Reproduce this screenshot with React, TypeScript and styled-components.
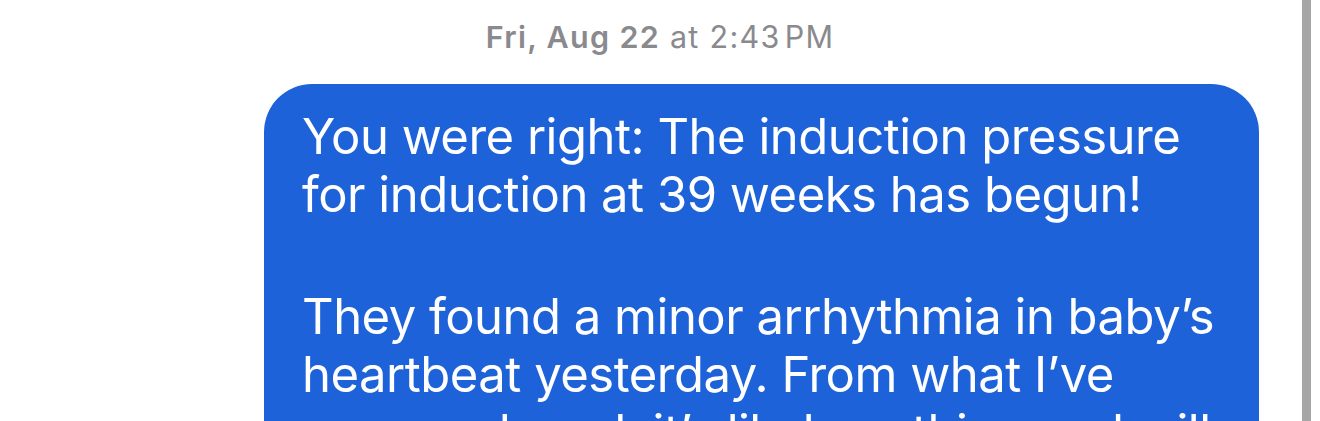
import React from "react";
import styled, { createGlobalStyle } from "styled-components";

const Global = createGlobalStyle`
  html, body { margin: 0; padding: 0; background: #ffffff; }
  body { font-family: Inter, "Noto Sans", sans-serif; -webkit-font-smoothing: antialiased; }
`;

const Screen = styled.div`
  display: flex;
  width: 1320px;
  height: 421px;
  overflow: hidden;
  background: #ffffff;
`;

const Thread = styled.div`
  flex: 1;
  display: flex;
  flex-direction: column;
  padding: 17px 43px 0 0;
`;

const StampRow = styled.div`
  display: flex;
  justify-content: center;
  padding-left: 61px;
`;

const Stamp = styled.div`
  font-size: 30.5px;
  line-height: 40px;
  color: #8a8a8e;
  letter-spacing: 1.3px;
  white-space: nowrap;
`;

const StampDay = styled.span`
  font-weight: 600;
`;

const Bubble = styled.div`
  align-self: flex-end;
  width: 995px;
  box-sizing: border-box;
  margin-top: 27px;
  padding: 24px 38px 40px;
  background: #1d62d8;
  color: #ffffff;
  border-radius: 48px;
  font-size: 49px;
  line-height: 58px;
  letter-spacing: -0.5px;
`;

const Para = styled.p<{ $gap?: boolean }>`
  margin: 0 0 ${(p) => (p.$gap ? "64px" : "0")};
`;

const Rail = styled.div`
  width: 18px;
  display: flex;
`;

const Thumb = styled.div`
  width: 9px;
  height: 100%;
  background: #a6a6a6;
`;

export default function App() {
  return (
    <>
      <Global />
      <Screen>
        <Thread>
          <StampRow>
            <Stamp>
              <StampDay>Fri, Aug 22</StampDay> at 2:43&#8202;PM
            </Stamp>
          </StampRow>
          <Bubble>
            <Para $gap>
              You were right: The induction pressure for induction at 39 weeks has begun!
            </Para>
            <Para>
              They found a minor arrhythmia in baby’s heartbeat yesterday. From what I’ve
              seen and read, it’s likely nothing and will resolve on its own.
            </Para>
          </Bubble>
        </Thread>
        <Rail>
          <Thumb />
        </Rail>
      </Screen>
    </>
  );
}
